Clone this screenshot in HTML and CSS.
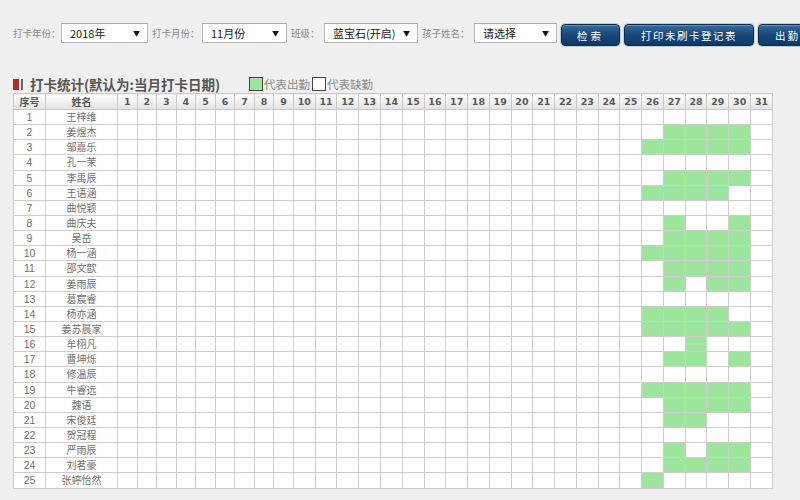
FILE: index.html
```html
<!DOCTYPE html>
<html lang="zh-CN">

<head>
    <meta charset="UTF-8">
    <meta name="viewport" content="width=device-width, initial-scale=1.0">
    <title>打卡统计</title>
    <link rel="stylesheet" href="styles.css">
</head>

<body>
    <div class="wrap">
        <div class="toolbar">
            <span class="lbl l_year">打卡年份：</span>
            <div class="sel s_year"><span>2018年</span><i>▼</i></div>
            <span class="lbl l_month">打卡月份：</span>
            <div class="sel s_month"><span>11月份</span><i>▼</i></div>
            <span class="lbl l_class">班级：</span>
            <div class="sel s_class"><span>蓝宝石(开启)</span><i>▼</i></div>
            <span class="lbl l_kid">孩子姓名：</span>
            <div class="sel s_kid"><span>请选择</span><i>▼</i></div>
            <button class="btn b_search">检索</button>
            <button class="btn b_print">打印未刷卡登记表</button>
            <button class="btn b_stat">出勤</button>
        </div>

        <div class="title_row">
            <span class="mark"><em></em><b></b></span>
            <h3 class="title">打卡统计(默认为:当月打卡日期)</h3>
            <span class="legend"><i class="box box_on"></i>代表出勤</span>
            <span class="legend"><i class="box"></i>代表缺勤</span>
        </div>

        <table class="att_table">
            <colgroup id="cols">
                <col class="c_no">
                <col class="c_name">
            </colgroup>
            <thead>
                <tr id="head">
                    <th>序号</th>
                    <th>姓名</th>
                </tr>
            </thead>
            <tbody id="list"></tbody>
        </table>
    </div>
    <script>
        const names = ["王梓维", "姜煜杰", "邹嘉乐", "孔一茉", "李禹辰", "王语涵", "曲悦颖", "曲庆夫", "吴岳",
            "杨一涵", "邵文歆", "姜雨辰", "葛宸睿", "杨亦涵", "姜苏晨家", "牟栩凡", "曹坤烁", "修温辰",
            "牛睿远", "魏语", "宋俊廷", "贺冠程", "严雨辰", "刘茗豪", "张婷怡然"];
        // days with a card swipe, one list per child
        const present = [
            [], [27, 28, 29, 30], [26, 27, 28, 29, 30], [], [27, 28, 29, 30],
            [26, 27, 28, 29], [], [27, 30], [27, 28, 29, 30], [26, 27, 28, 29, 30],
            [27, 28, 29, 30], [27, 29, 30], [], [26, 27, 28, 29], [26, 27, 28, 29, 30],
            [28], [27, 28, 30], [], [26, 27, 28, 29, 30], [27, 28, 29, 30],
            [27, 28], [], [27, 29, 30], [27, 28, 29, 30], [26]
        ];
        const cols = document.getElementById("cols"),
            head = document.getElementById("head"),
            list = document.getElementById("list");
        let col_html = "", head_html = "", body_html = "";

        for (let d = 1; d <= 31; d++) {
            col_html += '<col class="' + (d < 10 ? "c_day" : "c_day2") + '">';
            head_html += '<th class="day">' + d + '</th>';
        }
        names.forEach(function (name, i) {
            body_html += '<tr><td class="no">' + (i + 1) + '</td><td class="name">' + name + '</td>';
            for (let d = 1; d <= 31; d++) {
                body_html += present[i].indexOf(d) > -1 ? '<td class="on"></td>' : '<td></td>';
            }
            body_html += '</tr>';
        });
        cols.insertAdjacentHTML("beforeend", col_html);
        head.insertAdjacentHTML("beforeend", head_html);
        list.innerHTML = body_html;
    </script>
</body>

</html>
```

FILE: styles.css
```css
* {
    margin: 0;
    padding: 0;
    box-sizing: border-box;
}

body {
    background-color: #efefef;
    font-family: "Noto Sans CJK SC", sans-serif;
    overflow: hidden;
}

.wrap {
    padding: 23px 0 0 13px;
}

/* filter bar */
.toolbar {
    display: flex;
    align-items: flex-start;
    white-space: nowrap;
}

.lbl {
    font-size: 9.5px;
    line-height: 20px;
    color: #8a8a8a;
    flex-shrink: 0;
}

.l_year { width: 48px; }
.l_month { width: 50px; }
.l_class { width: 33px; }
.l_kid { width: 52px; }

.sel {
    height: 20px;
    margin-right: 4px;
    padding: 0 7px 0 8px;
    border: 1px solid #b8b8b8;
    border-top-color: #a9a9a9;
    background-color: #fff;
    display: flex;
    align-items: center;
    justify-content: space-between;
    font-size: 11px;
    color: #1a1a1a;
    flex-shrink: 0;
}

.sel i {
    font-style: normal;
    font-size: 7px;
    color: #111;
}

.s_year { width: 87px; }
.s_month { width: 85px; }
.s_class { width: 94px; }
.s_kid { width: 83px; }

.btn {
    height: 22px;
    margin-top: 1px;
    margin-right: 4px;
    border: 1px solid #0b2c50;
    border-radius: 4px;
    background: linear-gradient(#3a6c9c, #184b7c 45%, #0e3966);
    box-shadow: inset 0 1px 0 rgba(255, 255, 255, 0.25), 0 0 0 1px rgba(160, 175, 190, 0.5);
    color: #fff;
    font-family: "Noto Sans CJK SC", sans-serif;
    font-size: 10.5px;
    letter-spacing: 1.5px;
    flex-shrink: 0;
}

.b_search { width: 59px; letter-spacing: 3px; }
.b_print { width: 130px; }

.b_stat {
    width: 80px;
    padding-left: 16px;
    text-align: left;
    letter-spacing: 2px;
}

/* title + legend */
.title_row {
    margin-top: 29px;
    height: 18px;
    display: flex;
    align-items: center;
}

.mark {
    display: flex;
    gap: 2px;
    width: 17px;
}

.mark em {
    width: 6px;
    height: 11px;
    background-color: #b22a2a;
}

.mark b {
    width: 2px;
    height: 11px;
    background-color: #666;
}

.title {
    width: 219px;
    font-size: 13.5px;
    color: #555;
    font-weight: bold;
}

.legend {
    display: flex;
    align-items: center;
    margin-right: 2px;
    font-size: 11.5px;
    color: #8a8a8a;
}

.box {
    width: 14px;
    height: 14px;
    border: 1px solid #444;
    background-color: #fff;
    margin-right: 1px;
}

.box_on {
    background-color: #9de49d;
}

/* attendance table */
.att_table {
    width: 760px;
    border-collapse: collapse;
    table-layout: fixed;
    background-color: #fff;
}

.c_no { width: 32px; }
.c_name { width: 72px; }
.c_day { width: 19.56px; }
.c_day2 { width: 21.77px; }

.att_table th {
    height: 16px;
    border: 1px solid #c9c9c9;
    background: linear-gradient(#ffffff, #e2e2e2);
    font-size: 10px;
    color: #555;
    font-weight: bold;
    text-align: center;
}

.att_table th.day {
    font-family: "DejaVu Sans", sans-serif;
    font-size: 9.5px;
    color: #5a5a5a;
}

.att_table tbody tr {
    height: 15.15px;
}

.att_table td {
    border: 1px solid #cdcdcd;
    font-size: 10px;
    line-height: 12px;
    color: #707070;
    text-align: center;
}

.att_table td.no {
    font-family: "Liberation Sans", sans-serif;
    font-size: 10.5px;
}

.att_table td.on {
    background-color: #9de49d;
}
```
